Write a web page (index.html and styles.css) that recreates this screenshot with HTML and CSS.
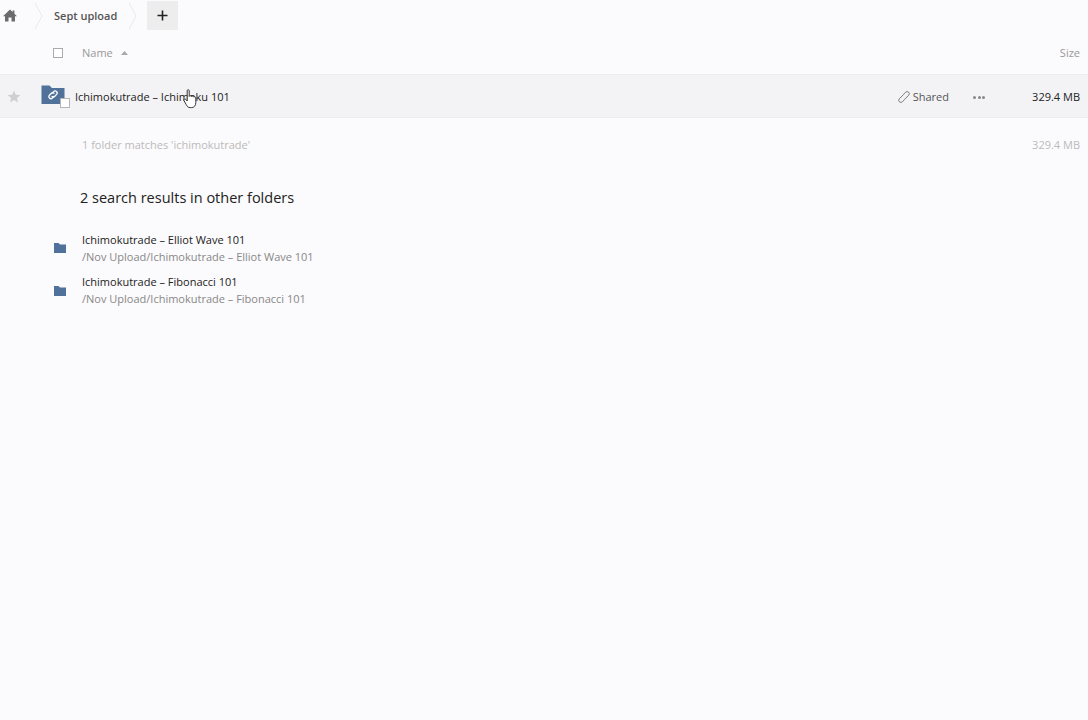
FILE: index.html
```html
<!DOCTYPE html>
<html lang="en">
<head>
<meta charset="utf-8">
<title>Files</title>
<link rel="stylesheet" href="styles.css">
</head>
<body>
<nav class="crumbs">
  <span class="home"><svg width="14" height="13" viewBox="0 0 14 13"><path d="M7 0.5 L9.6 3 V1.5 H11.4 V4.7 L14 7.2 H12 V12.5 H8.5 V8.5 H5.5 V12.5 H2 V7.2 H0 Z" fill="#6b6b6b"/></svg></span>
  <svg class="chev" width="10" height="30" viewBox="0 0 10 30"><path d="M1 2 L8 15 L1 28" fill="none" stroke="#eaeaea"/></svg>
  <span class="crumb">Sept upload</span>
  <svg class="chev chev-b" width="10" height="30" viewBox="0 0 10 30"><path d="M1 2 L8 15 L1 28" fill="none" stroke="#eaeaea"/></svg>
  <button class="add"><svg width="11" height="11" viewBox="0 0 11 11"><path d="M5.5 0.5 V10.5 M0.5 5.5 H10.5" stroke="#222" stroke-width="1.6"/></svg></button>
</nav>
<header class="head">
  <span class="check"></span>
  <span class="name-h">Name</span>
  <svg class="sort" width="7" height="4" viewBox="0 0 7 4"><path d="M3.5 0 L7 4 H0 Z" fill="#a8a8a8"/></svg>
  <span class="size-h">Size</span>
</header>
<section class="row">
  <svg class="star" width="14" height="13" viewBox="0 0 14 13"><path d="M7 0.5 L8.8 4.8 L13.5 5.1 L9.9 8 L11 12.5 L7 10 L3 12.5 L4.1 8 L0.5 5.1 L5.2 4.8 Z" fill="#cfcfcf"/></svg>
  <span class="thumb">
    <svg width="24" height="22" viewBox="0 0 24 22">
      <path d="M0.5 0.5 H8.5 L11 3 H23.5 V19 H0.5 Z" fill="#4f719a"/>
      <g fill="none" stroke="#fff" stroke-width="1.3" stroke-linecap="round">
        <path d="M11 8.2 L12.6 6.6 A2 2 0 0 1 15.6 9.4 L13.6 11.4 A2 2 0 0 1 11 11.4"/>
        <path d="M13 11.4 L11.4 13 A2 2 0 0 1 8.4 10.2 L10.4 8.2 A2 2 0 0 1 13 8.2"/>
      </g>
    </svg>
    <span class="thumb-check"></span>
  </span>
  <span class="row-name">Ichimokutrade – Ichimoku 101</span>
  <span class="shared">
    <svg width="12" height="12" viewBox="0 0 12 12"><g fill="none" stroke="#777" stroke-width="1"><path d="M5.2 3.6 L7.6 1.3 A2 2 0 0 1 10.7 4.2 L6.6 8.3"/><path d="M6.8 8.4 L4.4 10.7 A2 2 0 0 1 1.3 7.8 L5.4 3.7"/></g></svg>
    Shared
  </span>
  <span class="dots"><i></i><i></i><i></i></span>
  <span class="row-size">329.4 MB</span>
  <svg class="cursor" width="16" height="20" viewBox="0 0 16 20"><path d="M4.2 1.6 C4.2 0.4 6.2 0.4 6.2 1.6 V7.4 C6.6 6.4 8.2 6.6 8.4 7.6 C8.8 6.8 10.4 7 10.6 8 C11.2 7.4 12.8 7.8 12.8 9 V13.5 C12.8 16.5 11.2 18.6 8.6 18.6 H7.2 C5 18.6 4.2 17.4 3.2 15.6 L1 11.6 C0.4 10.4 2 9.4 2.9 10.4 L4.2 12 Z" fill="#fff" stroke="#333" stroke-width="1"/></svg>
</section>
<section class="summary">
  <span>1 folder matches 'ichimokutrade'</span>
  <span>329.4 MB</span>
</section>
<h2 class="title">2 search results in other folders</h2>
<ul class="results">
  <li class="result">
    <svg class="mini" width="12" height="10" viewBox="0 0 12 10"><path d="M0 0 H4.5 L6 1.5 H12 V10 H0 Z" fill="#4f719a"/></svg>
    <div><div class="r-name">Ichimokutrade – Elliot Wave 101</div><div class="r-path">/Nov Upload/Ichimokutrade – Elliot Wave 101</div></div>
  </li>
  <li class="result">
    <svg class="mini" width="12" height="10" viewBox="0 0 12 10"><path d="M0 0 H4.5 L6 1.5 H12 V10 H0 Z" fill="#4f719a"/></svg>
    <div><div class="r-name">Ichimokutrade – Fibonacci 101</div><div class="r-path">/Nov Upload/Ichimokutrade – Fibonacci 101</div></div>
  </li>
</ul>
</body>
</html>
```
FILE: styles.css
```css
* { box-sizing: border-box; }
html, body { height: 100%; }
body {
  margin: 0;
  background: #fbfafc;
  font-family: "Open Sans", sans-serif;
  font-size: 11px;
  color: #222;
  overflow: hidden;
}
.crumbs { display: flex; align-items: center; height: 31px; }
.home { width: 34px; padding-left: 3px; display: flex; }
.chev { flex: none; }
.crumb { margin-left: 10px; width: 74px; font-weight: 600; color: #555; }
.chev-b { margin-left: 0; }
.add {
  width: 31px; height: 29px; margin-left: 9px; padding: 0;
  border: 0; background: #ededed; display: flex; align-items: center; justify-content: center;
}
.head {
  display: flex; align-items: center; height: 44px;
  border-bottom: 1px solid #ececec; color: #999;
}
.check {
  width: 10px; height: 10px; margin-left: 53px;
  border: 1px solid #aaa; background: #fff;
}
.name-h { margin-left: 19px; }
.sort { margin-left: 8px; }
.size-h { margin-left: auto; margin-right: 8px; }
.row {
  position: relative; display: flex; align-items: center; height: 43px;
  background: #f3f3f5; border-bottom: 1px solid #ececec;
}
.star { margin-left: 7px; flex: none; }
.thumb { position: relative; margin-left: 20px; width: 24px; height: 22px; flex: none; }
.thumb svg { display: block; }
.thumb-check {
  position: absolute; left: 19px; top: 13px; width: 10px; height: 10px;
  background: #fff; border: 1px solid #b5b5b5;
}
.row-name { margin-left: 10px; }
.shared { margin-left: auto; display: flex; align-items: center; gap: 3px; color: #555; }
.shared svg { margin-top: 2px; }
.dots { display: flex; gap: 1.5px; margin-left: 24px; margin-top: 2px; }
.dots i { width: 3px; height: 3px; border-radius: 50%; background: #888; }
.row-size { width: 103px; text-align: right; padding-right: 8px; }
.cursor { position: absolute; left: 183px; top: 14px; }
.summary {
  display: flex; justify-content: space-between; align-items: center;
  height: 52px; padding: 0 8px 0 82px; color: #bbb;
}
.title {
  margin: 0; padding: 15px 0 0 80px; height: 57px;
  font-size: 14.5px; font-weight: 400; line-height: 26px; color: #222;
}
.results { list-style: none; margin: 0; padding: 0; }
.result { display: flex; align-items: center; height: 42.5px; padding-left: 54px; }
.mini { flex: none; margin-right: 16px; }
.r-name { line-height: 16px; color: #222; }
.r-path { line-height: 17px; color: #888; }
```
